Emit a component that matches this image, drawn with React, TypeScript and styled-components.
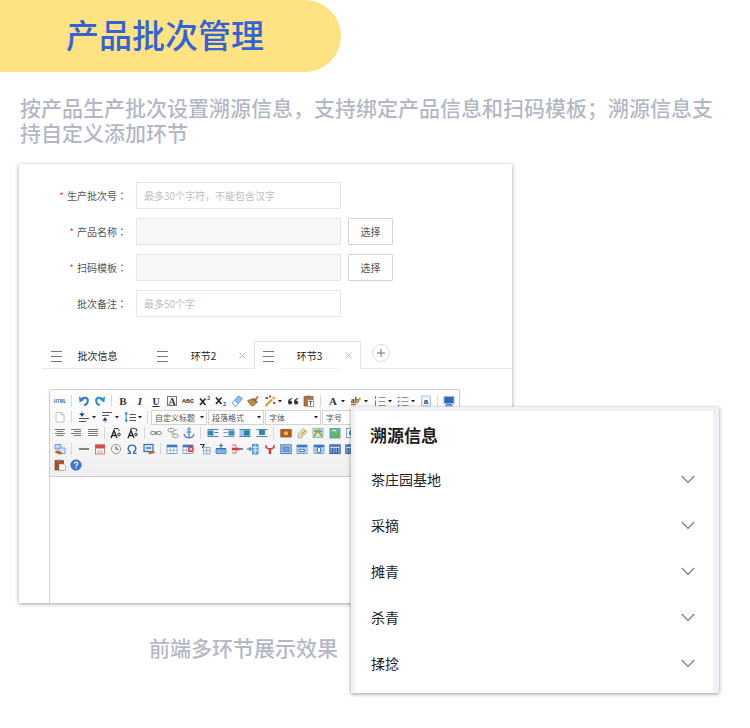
import React from "react";
import styled, { createGlobalStyle } from "styled-components";

const SANS = '"Noto Sans CJK SC", "Noto Sans", sans-serif';

const GlobalStyle = createGlobalStyle`
  *, *::before, *::after { box-sizing: border-box; }
  body { margin: 0; background: #fff; font-family: ${SANS}; color: #333; }
  button, input, select, textarea { font-family: inherit; margin: 0; border-radius: 0; }
  button { padding: 0; border: 0; background: none; color: inherit; cursor: pointer; }
`;

/* ---------- page ---------- */

const Page = styled.main`
  padding-bottom: 35px;
`;

const Banner = styled.header`
  width: 341px;
  max-width: 100%;
  height: 72px;
  padding: 0 0 5px 66px;
  display: flex;
  align-items: center;
  background: #ffe382;
  border-radius: 0 36px 36px 0;
`;

const BannerTitle = styled.h1`
  margin: 0;
  font-size: 33px;
  line-height: 48px;
  font-weight: 500;
  color: #3563d6;
`;

const Intro = styled.p`
  margin: 23px 36px 19px 20px;
  font-size: 21px;
  line-height: 25px;
  font-weight: 500;
  color: #b4b8c6;
`;

const Stage = styled.section`
  margin: 0 31px 0 19px;
  display: grid;
  grid-template-columns: 332fr 161fr 207fr;
  grid-template-rows: minmax(243px, auto) minmax(196px, auto) minmax(90px, auto);
`;

const Caption = styled.p`
  grid-area: 3 / 1 / 4 / 2;
  margin: 0;
  padding: 0 13px 2px 0;
  align-self: center;
  text-align: right;
  font-size: 21px;
  line-height: 25px;
  font-weight: 500;
  color: #b4b8c6;
`;

/* ---------- form card ---------- */

const FormCard = styled.form`
  grid-area: 1 / 1 / 3 / 3;
  min-width: 0;
  padding-top: 18px;
  display: flex;
  flex-direction: column;
  background: #fff;
  box-shadow: 0 1px 4px rgba(0, 0, 0, 0.38);
  overflow: hidden;
`;

const Fields = styled.div`
  display: grid;
  gap: 9px;
`;

const FieldRow = styled.div`
  display: grid;
  grid-template-columns: 117px minmax(0, 205px) 45px;
  align-items: center;
`;

const FieldLabel = styled.label`
  padding-right: 9px;
  text-align: right;
  font-size: 10px;
  line-height: 27px;
  color: #555;
  white-space: nowrap;
`;

const Star = styled.span`
  margin-right: 3px;
  color: #d9534f;
`;

const Colon = styled.span`
  font-family: "Noto Sans CJK TC", sans-serif;
`;

const TextField = styled.input`
  width: 100%;
  height: 27px;
  padding: 0 7px;
  border: 1px solid #e6e6e6;
  background: #fff;
  font-size: 10px;
  color: #444;
  &::placeholder { color: #bdbdbd; opacity: 1; }
  &:read-only { background: #f7f7f7; }
`;

const PickButton = styled.button`
  width: 45px;
  height: 27px;
  margin-left: 7px;
  border: 1px solid #d3d3d3;
  border-radius: 1px;
  background: #fff;
  font-size: 10px;
  color: #555;
`;

/* ---------- tabs ---------- */

const Tabs = styled.div`
  margin: 24px 0 20px 23px;
  display: flex;
  align-items: stretch;
  height: 28px;
  box-shadow: inset 0 -1px 0 #e6e6e6;
`;

const Tab = styled.div<{ $active?: boolean }>`
  width: 107px;
  margin-right: -1px;
  padding: 0 7px 0 8px;
  display: grid;
  grid-template-columns: 11px 57px 7px;
  column-gap: 7px;
  align-items: center;
  border: 1px solid ${(p) => (p.$active ? "#e2e2e2" : "transparent")};
  border-bottom: 0;
  background: ${(p) => (p.$active ? "#fff" : "transparent")};
`;

const TabLabel = styled.button<{ $active?: boolean }>`
  height: 26px;
  border-bottom: 1px solid ${(p) => (p.$active ? "#f0f0f0" : "transparent")};
  font-size: 10px;
  color: #222;
`;

const IconButton = styled.button`
  display: grid;
  place-items: center;
  height: 14px;
`;

const AddButton = styled.button`
  width: 18px;
  height: 18px;
  margin: 3px 0 0 12px;
  display: grid;
  place-items: center;
  border: 1px solid #dcdcdc;
  border-radius: 50%;
`;

/* ---------- editor ---------- */

const Editor = styled.div`
  flex: 1;
  margin: 0 52px 0 30px;
  display: flex;
  flex-direction: column;
  border: 1px solid #d3d3d3;
  border-bottom: 0;
  border-radius: 2px 2px 0 0;
`;

const Toolbar = styled.div`
  padding: 3px 2px 3px;
  display: grid;
  grid-auto-rows: 16px;
  background: linear-gradient(#fff, #efefef);
  border-bottom: 1px solid #cdcdcd;
  box-shadow: 0 1px 2px rgba(0, 0, 0, 0.12);
`;

const ToolRow = styled.div<{ $spread?: boolean }>`
  display: flex;
  align-items: center;
  justify-content: ${(p) => (p.$spread ? "space-between" : "flex-start")};
  overflow: hidden;
`;

const Tool = styled.button<{ $menu?: boolean }>`
  flex: none;
  width: ${(p) => (p.$menu ? 23 : 16)}px;
  height: 16px;
  display: flex;
  align-items: center;
  justify-content: center;
  gap: 2px;
`;

const Divider = styled.span`
  flex: none;
  width: 7px;
  height: 12px;
  background: linear-gradient(90deg, transparent 3px, #d8d8d8 3px, #d8d8d8 4px, transparent 4px);
`;

const Picker = styled.span`
  flex: none;
  width: 56px;
  height: 15px;
  margin-right: 1px;
  display: grid;
  grid-template-columns: 1fr 6px;
  align-items: center;
  border: 1px solid #d3d3d3;
  background: #fff;
`;

const PickerSelect = styled.select`
  min-width: 0;
  height: 13px;
  padding: 0 0 0 3px;
  border: 0;
  appearance: none;
  background: transparent;
  font-size: 8px;
  line-height: 13px;
  color: #555;
`;

const Area = styled.textarea`
  flex: 1;
  width: 100%;
  min-height: 120px;
  padding: 8px;
  border: 0;
  resize: none;
  display: block;
  outline: none;
  background: #fff;
`;

/* ---------- result card ---------- */

const ResultCard = styled.aside`
  grid-area: 2 / 2 / 4 / 4;
  position: relative;
  background: #fff;
  border: solid #eff1f4;
  border-width: 4px 6px 0 4px;
  box-shadow: 0 1px 4px rgba(0, 0, 0, 0.4);
  padding-bottom: 6px;
`;

const ResultTitle = styled.h2`
  margin: 0;
  padding-left: 15px;
  font-size: 17px;
  line-height: 48px;
  height: 46px;
  font-weight: 700;
  color: #1c1c1c;
`;

const ResultItem = styled.button`
  width: 100%;
  height: 46px;
  padding: 0 18px 2px 16px;
  display: flex;
  align-items: center;
  justify-content: space-between;
  font-size: 14px;
  color: #222;
`;

/* ---------- icons ---------- */

const Svg = ({ children }: { children: React.ReactNode }) => (
  <svg width="12" height="12" viewBox="0 0 12 12" fill="none" aria-hidden="true">
    {children}
  </svg>
);

const Caret = () => (
  <svg width="4" height="3" viewBox="0 0 4 3" aria-hidden="true">
    <path d="M0 0h4L2 2.6z" fill="#222" />
  </svg>
);

const Grip = () => (
  <svg width="11" height="12" viewBox="0 0 11 12" aria-hidden="true">
    <path d="M0 1.5h11M0 6.5h11M0 11.5h11" stroke="#777" />
  </svg>
);

const Cross = () => (
  <svg width="7" height="7" viewBox="0 0 7 7" aria-hidden="true">
    <path d="M.5.5l6 6M6.5.5l-6 6" stroke="#b5b5b5" />
  </svg>
);

const Plus = () => (
  <svg width="8" height="8" viewBox="0 0 8 8" aria-hidden="true">
    <path d="M4 0v8M0 4h8" stroke="#999" strokeWidth="1.4" />
  </svg>
);

const Chevron = () => (
  <svg width="14" height="9" viewBox="0 0 14 9" fill="none" aria-hidden="true">
    <path d="M.8 1l6.2 6.4L13.2 1" stroke="#777" strokeWidth="1.1" />
  </svg>
);

const Glyph = ({
  t,
  size = 11,
  italic,
  line,
}: {
  t: string;
  size?: number;
  italic?: boolean;
  line?: boolean;
}) => (
  <text
    x="6"
    y="10"
    textAnchor="middle"
    fontFamily="Liberation Serif, serif"
    fontWeight="700"
    fontSize={size}
    fontStyle={italic ? "italic" : "normal"}
    textDecoration={line ? "underline" : "none"}
    fill="#333"
  >
    {t}
  </text>
);

const Table = ({ fill = "#8fc0ee" }: { fill?: string }) => (
  <>
    <rect x="1" y="2" width="10" height="8.5" fill="#fff" stroke="#5b8fc9" strokeWidth=".8" />
    <path d="M1 2h10v2.4H1z" fill="#3b78c2" />
    <path d="M1.4 4.6h9.2v5.5H1.4z" fill={fill} opacity=".55" />
    <path d="M4.3 4v6.5M7.7 4v6.5M1 7.2h10" stroke="#5b8fc9" strokeWidth=".6" />
  </>
);

const Lines = ({ d, color = "#777" }: { d: string; color?: string }) => (
  <path d={d} stroke={color} />
);

const art: Record<string, React.ReactNode> = {
  html: (
    <text x="6" y="7.5" textAnchor="middle" fontFamily="Liberation Sans, sans-serif" fontWeight="700" fontSize="4.5" fill="#2b6cb5">
      HTML
    </text>
  ),
  undo: (
    <>
      <path d="M3.5 5.2C5 1.6 10.2 2.2 9.8 6.2 9.6 8.4 8 9.8 6.2 10.2" stroke="#2f7fd6" strokeWidth="2" />
      <path d="M1 1.6l.6 5.8 4.8-2.6z" fill="#2f7fd6" />
    </>
  ),
  redo: (
    <>
      <path d="M8.5 5.2C7 1.6 1.8 2.2 2.2 6.2c.2 2.2 1.8 3.6 3.6 4" stroke="#2f8bdc" strokeWidth="2" />
      <path d="M11 1.6l-.6 5.8-4.8-2.6z" fill="#2f8bdc" />
    </>
  ),
  bold: <Glyph t="B" />,
  italic: <Glyph t="I" italic />,
  underline: <Glyph t="U" size={10} line />,
  boxed: (
    <>
      <rect x="1.5" y="1.5" width="9" height="9" stroke="#777" />
      <Glyph t="A" size={10} />
    </>
  ),
  strike: (
    <>
      <text x="6" y="8" textAnchor="middle" fontFamily="Liberation Sans, sans-serif" fontWeight="700" fontSize="5.5" fill="#333">
        ABC
      </text>
      <path d="M0 6h12" stroke="#555" strokeWidth=".5" />
    </>
  ),
  sup: (
    <>
      <path d="M1 3.5l5.5 6.500M6.500 3.500L1 10" stroke="#222" strokeWidth="1.600" />
      <path d="M8.500 1.500h2v1.300l-2 1.700h2.400" stroke="#3b62c4" strokeWidth=".9" />
    </>
  ),
  sub: (
    <>
      <path d="M1 2.500L6.500 9M6.500 2.500L1 9" stroke="#222" strokeWidth="1.600" />
      <path d="M8.500 7.500h2v1.300l-2 1.700h2.400" stroke="#3b62c4" strokeWidth=".9" />
    </>
  ),
  eraser: (
    <>
      <path d="M1 8L7.500.8l4 2.800L5 11.300z" fill="#8fc0f2" stroke="#5a8fd0" strokeWidth=".8" />
      <path d="M1 8l2-2.400 4 3L5 11.300z" fill="#fff" stroke="#5a8fd0" strokeWidth=".6" />
    </>
  ),
  brush: (
    <>
      <path d="M7 4.500L10.500.8l1.200 1.200-2.600 3.800z" fill="#b8803a" />
      <path d="M.5 5.500l6-2 4 3.500L6 11.200 3 9.500z" fill="#c48a3e" stroke="#7c4f1b" strokeWidth=".6" />
      <path d="M6 3.800l4 3.400" stroke="#3f6aa8" strokeWidth="1.200" />
    </>
  ),
  magic: (
    <>
      <path d="M1.500 11l6.500-6.500" stroke="#d8902a" strokeWidth="2" />
      <path d="M1.500 3h2.500M9 8h2.400M5 1.500h2" stroke="#d0452c" strokeWidth="2" />
      <path d="M8.500 2.500l2.500 1" stroke="#e7a437" strokeWidth="2.200" />
    </>
  ),
  quote: (
    <path
      d="M5.4 3C2.6 3.2 1 4.8 1 7.2 1 8.6 1.9 9.5 3.1 9.5S5.2 8.7 5.2 7.5 4.2 5.6 3.2 5.7C3.5 4.7 4.3 4 5.4 3.8zM11.4 3C8.6 3.2 7 4.8 7 7.2c0 1.4.9 2.3 2.1 2.3s2.1-.8 2.1-2-1-1.9-2-1.8c.3-1 1.1-1.7 2.2-1.9z"
      fill="#333"
    />
  ),
  paste: (
    <>
      <rect x="1" y="1.5" width="9" height="9.5" fill="#b9713a" stroke="#8a4a1d" strokeWidth=".6" />
      <rect x="3.5" y=".6" width="4" height="2" fill="#777" />
      <path d="M4.5 4.5h6.2v7H4.5z" fill="#fff" stroke="#666" strokeWidth=".6" />
      <path d="M5.6 6.3h4M7.6 6.3v4" stroke="#444" strokeWidth=".9" />
    </>
  ),
  pasteWord: (
    <>
      <rect x="1" y="1.5" width="8.5" height="9.5" fill="#a5521f" stroke="#7a3a14" strokeWidth=".6" />
      <rect x="3" y=".6" width="4" height="2" fill="#888" />
      <path d="M5 5h4.500l2 2v4.500H5z" fill="#fff" stroke="#888" strokeWidth=".6" />
    </>
  ),
  color: <Glyph t="A" />,
  marker: (
    <>
      <text x="5" y="8" textAnchor="middle" fontFamily="Liberation Serif, serif" fontWeight="700" fontSize="8" fill="#5a3208">
        ab
      </text>
      <path d="M5.5 8.5l5-5.5" stroke="#d99a2b" strokeWidth="2" />
      <path d="M1 9.5h5" stroke="#c06a1f" strokeWidth="1.6" />
    </>
  ),
  ol: (
    <>
      <Lines d="M4.5 2.5h7M4.5 6.5h7M4.5 10.5h7" color="#8a93a3" />
      <path d="M1.5 1v3M.8 6h1.6M1.5 6v5" stroke="#3b6fc8" strokeWidth=".9" />
    </>
  ),
  ul: (
    <>
      <Lines d="M4.5 2.5h7M4.5 6.5h7M4.5 10.5h7" color="#8a93a3" />
      <path d="M.8 2.5h1.7M.8 6.5h1.7M.8 10.5h1.7" stroke="#3b6fc8" strokeWidth="1.6" />
    </>
  ),
  abox: (
    <>
      <rect x="1.5" y="1" width="9" height="10" rx="1" fill="#eef5fd" stroke="#a8bedb" />
      <text x="6" y="8.500" textAnchor="middle" fontFamily="Liberation Sans, sans-serif" fontWeight="700" fontSize="8" fill="#2c3e66">
        a
      </text>
    </>
  ),
  screen: (
    <>
      <rect x="1" y="1.5" width="10" height="7" fill="#3566b8" stroke="#9db9df" strokeWidth=".8" />
      <path d="M3 9.5h6M2 10.8h8" stroke="#5b7fb8" />
    </>
  ),
  page: <path d="M2 1.500h5.500l2.500 2.500v7H2zM7.500 1.500V4H10" fill="#fff" stroke="#b8bec6" strokeWidth=".9" />,
  paraTop: (
    <>
      <Lines d="M1 7.500h10M1 10.500h7" color="#555" />
      <path d="M4 0v3M1.800 2.600h4.400L4 5.400z" stroke="#3a78c8" strokeWidth=".6" fill="#222" />
    </>
  ),
  paraBottom: (
    <>
      <Lines d="M1 1.500h10M1 4.500h7" color="#555" />
      <path d="M4 12V9M1.800 9.400h4.400L4 6.600z" stroke="#3a78c8" strokeWidth=".6" fill="#222" />
    </>
  ),
  lineHeight: (
    <>
      <Lines d="M5.500 3.500H12M5.500 6.500H12M5.500 9.500H12" color="#555" />
      <path d="M2.200.5L.4 3.200H4zM2.200 11.500L.4 8.800H4z" fill="#3a78c8" />
      <path d="M2.200 3v6" stroke="#3a78c8" />
    </>
  ),
  center: <Lines d="M1 2.500h10M2.500 4.500h7M1 6.500h10M2.500 8.500h7" />,
  right: <Lines d="M1 2.500h10M4 4.500h7M1 6.500h10M4 8.500h7" />,
  justify: <Lines d="M1 2.500h10M1 4.500h10M1 6.500h10M1 8.500h10" />,
  upper: (
    <>
      <path d="M1 11l3-7.500L7 11M2 8.500h4" stroke="#222" strokeWidth="1.300" />
      <circle cx="9" cy="7.500" r="1.300" stroke="#222" />
      <path d="M4 1.500h4l1.500 2.500" stroke="#333" />
    </>
  ),
  lower: (
    <>
      <path d="M1 11l3-7.500L7 11M2 8.500h4" stroke="#222" strokeWidth="1.300" />
      <circle cx="9" cy="7.500" r="1.300" stroke="#222" />
      <path d="M3 2.500l3-1.500 4 1.500-1 2" stroke="#333" />
    </>
  ),
  link: (
    <>
      <rect x=".6" y="4.500" width="5.400" height="3" rx="1.500" stroke="#888" />
      <rect x="6" y="4.500" width="5.400" height="3" rx="1.500" stroke="#888" />
      <path d="M4 6h4" stroke="#777" />
    </>
  ),
  unlink: (
    <>
      <rect x="1" y="1.500" width="6" height="3.400" rx="1.700" stroke="#999" />
      <rect x="5" y="7" width="6" height="3.400" rx="1.700" stroke="#999" />
      <path d="M4 4l3.500 4M9.500 2l-2 2" stroke="#888" />
    </>
  ),
  anchor: (
    <>
      <circle cx="6" cy="2" r="1.200" stroke="#3b80c9" />
      <path d="M6 3.200V11M3.500 5h5M1 6.800c.3 2.600 2.400 4 5 4s4.700-1.400 5-4" stroke="#3b80c9" strokeWidth="1.200" />
    </>
  ),
  imgLeft: (
    <>
      <Lines d="M.5 2.500h11M7.500 5.500h4M.5 9.500h11" color="#4d86bd" />
      <rect x=".5" y="3.500" width="6" height="5" fill="#2f8fae" />
    </>
  ),
  imgRight: (
    <>
      <Lines d="M.5 2.500h11M.5 5.500h4M.5 9.500h11" color="#6d94bd" />
      <rect x="5.500" y="3.500" width="6" height="5" fill="#3a8fb5" />
    </>
  ),
  imgMid: (
    <>
      <rect x=".5" y="2" width="11" height="8" fill="#9fc6e6" />
      <rect x="5" y="3.500" width="5.500" height="5" fill="#23809f" />
      <Lines d="M.5 2.500h11M.5 9.500h11" color="#4d86bd" />
    </>
  ),
  imgBlock: (
    <>
      <Lines d="M.5 2.500h11M.5 9.500h11" color="#4d86bd" />
      <rect x="3" y="3" width="6" height="5" fill="#2d8bb0" />
    </>
  ),
  photo: (
    <>
      <rect x=".8" y="2.500" width="10.400" height="7.500" fill="#c2581c" stroke="#7c5c3a" strokeWidth=".8" />
      <circle cx="6" cy="6.200" r="2" fill="#f8c04a" />
    </>
  ),
  smile: (
    <>
      <path d="M2 7l5-5.500 4 3L6 10.500 2.500 11z" fill="#e8e0a8" stroke="#a7a98a" strokeWidth=".8" />
      <path d="M5 8l4-4" stroke="#7a9a4a" />
    </>
  ),
  map: (
    <>
      <rect x="1" y="1.500" width="10" height="9" fill="#cfe2c3" stroke="#8aa6bd" strokeWidth=".8" />
      <path d="M2 9.500l4-6 4 6M2 4h3" stroke="#7a9a3a" strokeWidth="1.300" />
      <path d="M7 3l3 2" stroke="#4d86bd" strokeWidth="1.400" />
    </>
  ),
  media: (
    <>
      <rect x="1" y="1.500" width="10" height="9.500" fill="#57b6c9" stroke="#4e91ab" strokeWidth=".8" />
      <path d="M2 9l3-5 2.500 3L10 4v6H2z" fill="#6fb542" />
      <path d="M3 3.500h4" stroke="#f3e05a" strokeWidth="1.600" />
    </>
  ),
  frame: (
    <>
      <rect x="1.500" y="1.500" width="10" height="9" fill="#fff" stroke="#8f9db5" />
      <circle cx="7" cy="6" r="3" fill="#3d83b8" />
      <path d="M5.500 5.500h3" stroke="#cfe6f5" />
    </>
  ),
  template: (
    <>
      <path d="M1 1.500h6v4.500H1z" fill="#bcd6f3" stroke="#5b8fc9" strokeWidth=".8" />
      <path d="M5 5h6v5.500H5z" fill="#d5e6f8" stroke="#5b8fc9" strokeWidth=".8" />
      <path d="M1.500 8.500l6 2" stroke="#b9632a" strokeWidth="2.400" />
    </>
  ),
  rule: <path d="M1 6h10" stroke="#444" strokeWidth="1.300" />,
  calendar: (
    <>
      <rect x="1.500" y="2" width="9" height="9" fill="#fff" stroke="#b96a6a" strokeWidth=".8" />
      <path d="M1 1.500h10v4H1z" fill="#d94a4a" />
      <path d="M3 8h6M3 9.800h6" stroke="#c9a0a0" strokeWidth=".8" />
    </>
  ),
  clock: (
    <>
      <circle cx="6" cy="6" r="4.600" fill="#f6f6f6" stroke="#999" />
      <path d="M6 3v3.300h2.600" stroke="#555" />
    </>
  ),
  omega: (
    <path d="M1.500 10.300h2.800V9C1 7 1.600 2.200 6 2.200S11 7 7.700 9v1.300h2.800" stroke="#2d69b8" strokeWidth="1.300" />
  ),
  snap: (
    <>
      <rect x="1" y="1.500" width="9" height="7" fill="#dbe9f8" stroke="#2e6dbb" strokeWidth="1.200" />
      <path d="M3 5h5" stroke="#2e6dbb" strokeWidth="1.400" />
      <path d="M5.500 10l6-1" stroke="#b9713a" strokeWidth="2.400" />
    </>
  ),
  table: <Table fill="#fff" />,
  tableDel: (
    <>
      <Table fill="#fff" />
      <rect x="6" y="3.500" width="5.500" height="5.500" fill="#d8434b" />
      <path d="M7.300 4.800l3 3M10.300 4.800l-3 3" stroke="#fff" />
    </>
  ),
  title: (
    <>
      <path d="M1 1.500h4L3.500 5" stroke="#333" strokeWidth="1.200" />
      <path d="M4.500 4.500h6.500v6.500H4.500zM7.700 4.500V11M4.500 7.700H11" stroke="#8aa8cc" strokeWidth=".9" />
    </>
  ),
  rowIns: (
    <>
      <path d="M1 6h10v4.500H1z" fill="#7db4ea" stroke="#3f7fc6" strokeWidth=".8" />
      <path d="M6 .5v5M4 2.500h4M1 5.500h10" stroke="#3f6fb0" strokeWidth="1.200" />
    </>
  ),
  rowDel: (
    <>
      <path d="M1 6H8" stroke="#d13d3d" strokeWidth="2.600" />
      <path d="M1 2h4v2.500M1 10h4V7.500" stroke="#c96d6d" />
      <path d="M8 6h4" stroke="#5a6f92" strokeWidth="1.600" />
    </>
  ),
  colIns: (
    <>
      <path d="M5.500 1.500H11v9.500H5.500z" fill="#7db4ea" stroke="#3f7fc6" strokeWidth=".9" />
      <path d="M8.200 1.500V11M5.500 4.500H11M5.500 7.500H11" stroke="#fff" strokeWidth=".6" />
      <path d="M0 6h5M3 4v4" stroke="#3f6fb0" strokeWidth="1.200" />
    </>
  ),
  colDel: (
    <>
      <path d="M2 2v2.500l3 1.500M10 2v2.500L7 6" stroke="#c95050" strokeWidth="1.600" />
      <path d="M6 5v6" stroke="#d13d3d" strokeWidth="2.400" />
    </>
  ),
  merge: (
    <>
      <rect x=".8" y="1.800" width="10.400" height="8.800" fill="#a5c6ee" stroke="#4576b6" strokeWidth=".9" />
      <path d="M3 4h6v4.500H3z" fill="#6e9fe0" stroke="#4576b6" strokeWidth=".6" />
    </>
  ),
  mergeRight: (
    <>
      <Table />
      <path d="M3 6.500h5.500v2H3z" fill="#fff" stroke="#2e6dbb" strokeWidth=".8" />
    </>
  ),
  mergeDown: (
    <>
      <Table />
      <path d="M4.500 4.500h3v5h-3z" fill="#fff" stroke="#2e6dbb" strokeWidth=".8" />
    </>
  ),
  split: (
    <>
      <rect x=".8" y="1.800" width="10.400" height="8.800" fill="#6f9ddb" stroke="#38599b" strokeWidth=".9" />
      <path d="M3.500 2v8.500M6 2v8.500M8.500 2v8.500" stroke="#38599b" strokeWidth=".9" />
      <path d="M1.500 4.500h9" stroke="#fff" strokeWidth=".7" />
    </>
  ),
  help: (
    <>
      <circle cx="6" cy="6" r="5.200" fill="#3f74dd" stroke="#2a55b0" strokeWidth=".6" />
      <path d="M4.300 4.600C4.400 2.400 8 2.600 7.700 4.700 7.500 5.900 6 5.800 6 7.400M6 8.300v1.300" stroke="#fff" strokeWidth="1.200" />
    </>
  ),
};

/* "|" is a divider; a trailing "+" marks a button with a drop-down arrow. */
const rows: string[][] = [
  ["html", "|", "undo", "redo", "|", "bold", "italic", "underline", "boxed", "strike", "sup", "sub", "eraser", "brush", "magic+", "quote", "paste", "|", "color+", "marker+", "ol+", "ul+", "abox", "|", "screen"],
  ["page", "|", "paraTop+", "paraBottom+", "lineHeight+", "|"],
  ["center", "right", "justify", "|", "upper", "lower", "|", "link", "unlink", "anchor", "|", "imgLeft", "imgRight", "imgMid", "imgBlock", "|", "photo", "smile", "map", "media", "frame", "map", "page", "table", "photo", "media", "frame"],
  ["template", "|", "rule", "calendar", "clock", "omega", "snap", "|", "table", "tableDel", "title", "rowIns", "rowDel", "colIns", "colDel", "merge", "mergeRight", "mergeDown", "split", "split", "table", "merge", "split", "table", "page", "clock"],
  ["pasteWord", "help"],
];

const pickers = ["自定义标题", "段落格式", "字体", "字号"];

const renderItem = (item: string, i: number) => {
  if (item === "|") return <Divider key={i} />;
  const menu = item.endsWith("+");
  const name = menu ? item.slice(0, -1) : item;
  return (
    <Tool key={i} type="button" $menu={menu} aria-label={name}>
      <Svg>{art[name]}</Svg>
      {menu && <Caret />}
    </Tool>
  );
};

const fields = [
  { id: "batch-no", label: "生产批次号", required: true, hint: "最多30个字符，不能包含汉字" },
  { id: "product", label: "产品名称", required: true, pick: true },
  { id: "template", label: "扫码模板", required: true, pick: true },
  { id: "remark", label: "批次备注", hint: "最多50个字" },
];

const tabs = [
  { label: "批次信息" },
  { label: "环节2", closable: true },
  { label: "环节3", closable: true, active: true },
];

const steps = ["茶庄园基地", "采摘", "摊青", "杀青", "揉捻"];

export default function App() {
  return (
    <>
      <GlobalStyle />
      <Page lang="zh-CN">
        <Banner>
          <BannerTitle>产品批次管理</BannerTitle>
        </Banner>
        <Intro>按产品生产批次设置溯源信息，支持绑定产品信息和扫码模板；溯源信息支持自定义添加环节</Intro>
        <Stage>
          <FormCard onSubmit={(e) => e.preventDefault()}>
            <Fields>
              {fields.map((f) => (
                <FieldRow key={f.id}>
                  <FieldLabel htmlFor={f.id}>
                    {f.required && <Star>*</Star>}
                    {f.label}
                    <Colon lang="zh-TW">：</Colon>
                  </FieldLabel>
                  <TextField id={f.id} placeholder={f.hint} readOnly={f.pick} />
                  {f.pick && <PickButton type="button">选择</PickButton>}
                </FieldRow>
              ))}
            </Fields>
            <Tabs>
              {tabs.map((t) => (
                <Tab key={t.label} $active={t.active}>
                  <IconButton type="button" aria-label="拖动">
                    <Grip />
                  </IconButton>
                  <TabLabel type="button" $active={t.active}>
                    {t.label}
                  </TabLabel>
                  {t.closable && (
                    <IconButton type="button" aria-label="关闭">
                      <Cross />
                    </IconButton>
                  )}
                </Tab>
              ))}
              <AddButton type="button" aria-label="添加环节">
                <Plus />
              </AddButton>
            </Tabs>
            <Editor>
              <Toolbar>
                {rows.map((row, i) => (
                  <ToolRow key={i} $spread={row.length > 10}>
                    {row.map(renderItem)}
                    {i === 1 &&
                      pickers.map((p) => (
                        <Picker key={p}>
                          <PickerSelect aria-label={p}>
                            <option>{p}</option>
                          </PickerSelect>
                          <Caret />
                        </Picker>
                      ))}
                  </ToolRow>
                ))}
              </Toolbar>
              <Area aria-label="环节内容" />
            </Editor>
          </FormCard>
          <ResultCard>
            <ResultTitle>溯源信息</ResultTitle>
            {steps.map((s) => (
              <ResultItem key={s} type="button">
                {s}
                <Chevron />
              </ResultItem>
            ))}
          </ResultCard>
          <Caption>前端多环节展示效果</Caption>
        </Stage>
      </Page>
    </>
  );
}
